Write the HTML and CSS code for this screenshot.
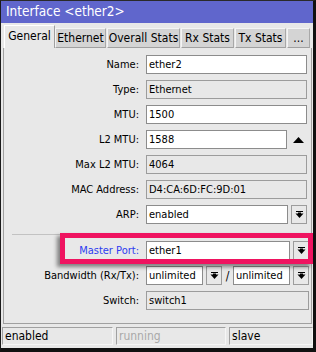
FILE: index.html
```html
<!DOCTYPE html>
<html lang="en">
<head>
    <meta charset="UTF-8">
    <title>Interface &lt;ether2&gt;</title>
    <link rel="stylesheet" href="styles.css">
</head>
<body>
<div class="window">
    <div class="titlebar">Interface &lt;ether2&gt;</div>

    <div class="tabs">
        <div class="tab active" style="width: 51px;">General</div>
        <div class="tab" style="width: 51px;">Ethernet</div>
        <div class="tab" style="width: 73px;">Overall Stats</div>
        <div class="tab" style="width: 53px;">Rx Stats</div>
        <div class="tab" style="width: 51px;">Tx Stats</div>
        <div class="tab" style="width: 23px;">...</div>
    </div>

    <div class="panel">
        <div class="form">
            <label>Name:</label>
            <div class="field"><span class="input">ether2</span></div>

            <label>Type:</label>
            <div class="field"><span class="input readonly">Ethernet</span></div>

            <label>MTU:</label>
            <div class="field"><span class="input">1500</span></div>

            <label>L2 MTU:</label>
            <div class="field">
                <span class="input">1588</span>
                <span class="spin">
                    <svg width="11" height="6" viewBox="0 0 11 6"><path d="M0 6 L5.5 0 L11 6 Z" fill="#000"/></svg>
                </span>
            </div>

            <label>Max L2 MTU:</label>
            <div class="field"><span class="input readonly">4064</span></div>

            <label>MAC Address:</label>
            <div class="field"><span class="input readonly">D4:CA:6D:FC:9D:01</span></div>

            <label>ARP:</label>
            <div class="field">
                <span class="input">enabled</span>
                <span class="drop-btn"><svg width="9" height="8" viewBox="0 0 9 8"><path d="M1 0.5 H8" stroke="#000" stroke-width="1"/><path d="M0.5 2.5 H8.5 L4.5 7 Z" fill="#000"/><rect x="3" y="1.5" width="3" height="2" fill="#000"/></svg></span>
            </div>
        </div>

        <div class="sep"></div>

        <div class="form lower">
            <div class="highlight"></div>

            <label class="link">Master Port:</label>
            <div class="field">
                <span class="input">ether1</span>
                <span class="drop-btn"><svg width="9" height="8" viewBox="0 0 9 8"><path d="M1 0.5 H8" stroke="#000" stroke-width="1"/><path d="M0.5 2.5 H8.5 L4.5 7 Z" fill="#000"/><rect x="3" y="1.5" width="3" height="2" fill="#000"/></svg></span>
            </div>

            <label>Bandwidth (Rx/Tx):</label>
            <div class="field">
                <span class="input short">unlimited</span>
                <span class="drop-btn"><svg width="9" height="8" viewBox="0 0 9 8"><path d="M1 0.5 H8" stroke="#000" stroke-width="1"/><path d="M0.5 2.5 H8.5 L4.5 7 Z" fill="#000"/><rect x="3" y="1.5" width="3" height="2" fill="#000"/></svg></span>
                <span class="slash">/</span>
                <span class="input short">unlimited</span>
                <span class="drop-btn"><svg width="9" height="8" viewBox="0 0 9 8"><path d="M1 0.5 H8" stroke="#000" stroke-width="1"/><path d="M0.5 2.5 H8.5 L4.5 7 Z" fill="#000"/><rect x="3" y="1.5" width="3" height="2" fill="#000"/></svg></span>
            </div>

            <label>Switch:</label>
            <div class="field"><span class="input readonly">switch1</span></div>
        </div>
    </div>

    <div class="statusbar">
        <div class="cell" style="width: 111px;">enabled</div>
        <div class="cell dim" style="width: 110px;">running</div>
        <div class="cell grow">slave</div>
    </div>
</div>
</body>
</html>
```

FILE: styles.css
```css
body {
    margin: 0;
    font-family: "DejaVu Sans Condensed", "DejaVu Sans", sans-serif;
    font-size: 11px;
    color: #000;
    background: #fff;
}

.window {
    width: 316px;
    height: 352px;
    box-sizing: border-box;
    border-top: 1px solid #2a2a2a;
    border-left: 1px solid #1a1a1a;
    border-right: 3px solid #111;
    border-bottom: 4px solid #111;
    background: #e8e8e8;
    display: flex;
    flex-direction: column;
}

.titlebar {
    height: 22px;
    line-height: 21px;
    padding-left: 5px;
    background: #6066cc;
    color: #fff;
    font-size: 13.5px;
}

.tabs {
    height: 25px;
    box-sizing: border-box;
    display: flex;
    align-items: flex-end;
    padding-left: 3px;
}

.tab {
    height: 20px;
    line-height: 19px;
    box-sizing: border-box;
    margin-right: 1px;
    text-align: center;
    font-size: 12px;
    background: #d4d4d4;
    border-top: 1px solid #f4f4f4;
    border-left: 1px solid #f4f4f4;
    border-right: 1px solid #a8a8a8;
    border-bottom: 1px solid #a0a0a0;
}

.tab.active {
    height: 23px;
    line-height: 20px;
    background: #e8e8e8;
    border-top: 1px solid #fff;
    border-left: 1px solid #fff;
    border-right: 1px solid #a0a0a0;
    border-bottom: none;
    margin-right: 0;
}

.panel {
    height: 276px;
    box-sizing: border-box;
    margin-left: 2px;
    width: 309px;
    border-left: 1px solid #a0a0a0;
    border-right: 1px solid #a0a0a0;
    border-bottom: 1px solid #a0a0a0;
    padding: 7px 4px 0 0;
}

.form {
    display: grid;
    grid-template-columns: 135px 1fr;
    grid-auto-rows: 19px;
    column-gap: 7px;
    row-gap: 6px;
}

.form label {
    text-align: right;
    line-height: 19px;
}

.form label.link {
    color: #2d3cf0;
}

.field {
    display: flex;
    gap: 3px;
    align-items: center;
}

.input {
    flex: 1;
    height: 19px;
    box-sizing: border-box;
    line-height: 17px;
    padding-left: 2px;
    background: #fff;
    border: 1px solid #8c8c8c;
    white-space: nowrap;
    overflow: hidden;
}

.input.readonly {
    background: #e8e8e8;
    border-color: #9c9c9c;
}

.input.short {
    flex: 0 0 57px;
}

.spin {
    width: 16px;
    height: 19px;
    display: flex;
    align-items: center;
    justify-content: center;
    padding-right: 1px;
}

.drop-btn {
    width: 16px;
    height: 19px;
    box-sizing: border-box;
    display: flex;
    align-items: center;
    justify-content: center;
    background: #e8e8e8;
    border: 1px solid #9c9c9c;
}

.slash {
    width: 5px;
    text-align: center;
    font-size: 12px;
}

.sep {
    height: 1px;
    margin: 10px 0 6px 8px;
    background: #c2c2c2;
}

.lower {
    position: relative;
}

.highlight {
    position: absolute;
    left: 56px;
    top: -8px;
    width: 253px;
    height: 31px;
    box-sizing: border-box;
    border: 5px solid #ef1360;
    box-shadow: -3px 3px 4px rgba(0, 0, 0, 0.45);
    pointer-events: none;
}

.statusbar {
    display: flex;
    gap: 3px;
    margin-top: 3px;
    height: 18px;
    padding-left: 1px;
}

.cell {
    box-sizing: border-box;
    height: 18px;
    line-height: 16px;
    padding-left: 2px;
    border-top: 1px solid #a0a0a0;
    border-left: 1px solid #a0a0a0;
    border-right: 1px solid #f6f6f6;
    border-bottom: 1px solid #f6f6f6;
    font-size: 12px;
}

.cell.dim {
    color: #a8a8a8;
}

.cell.grow {
    flex: 1;
}
```
